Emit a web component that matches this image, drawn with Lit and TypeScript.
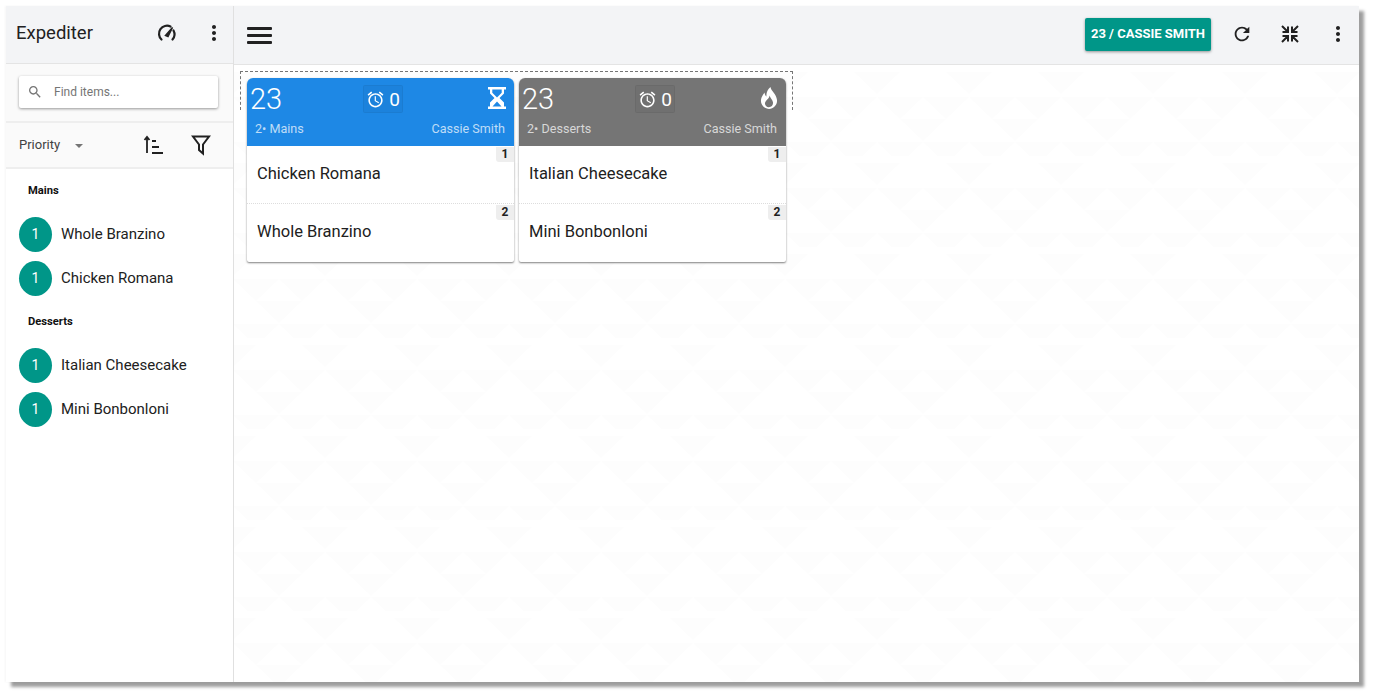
import { LitElement, html, css, svg } from "lit";
import { customElement } from "lit/decorators.js";

const P = {
  more: "M12 8c1.1 0 2-.9 2-2s-.9-2-2-2-2 .9-2 2 .9 2 2 2zm0 2c-1.1 0-2 .9-2 2s.9 2 2 2 2-.9 2-2-.9-2-2-2zm0 6c-1.1 0-2 .9-2 2s.9 2 2 2 2-.9 2-2-.9-2-2-2z",
  search: "M15.5 14h-.79l-.28-.27C15.41 12.59 16 11.11 16 9.5 16 5.91 13.09 3 9.5 3S3 5.91 3 9.5 5.91 16 9.5 16c1.61 0 3.09-.59 4.23-1.57l.27.28v.79l5 4.99L20.49 19l-4.99-5zm-6 0C7.01 14 5 11.99 5 9.5S7.01 5 9.5 5 14 7.01 14 9.5 11.99 14 9.5 14z",
  refresh: "M17.65 6.35C16.2 4.9 14.21 4 12 4c-4.42 0-7.99 3.58-7.99 8s3.57 8 7.99 8c3.73 0 6.84-2.55 7.73-6h-2.08c-.82 2.33-3.04 4-5.65 4-3.31 0-6-2.69-6-6s2.69-6 6-6c1.66 0 3.14.69 4.22 1.78L13 11h7V4l-2.35 2.35z",
  alarm: "M22 5.72l-4.6-3.86-1.29 1.53 4.6 3.86L22 5.72zM7.88 3.39L6.6 1.86 2 5.71l1.29 1.53 4.59-3.85zM12.5 8H11v6l4.75 2.85.75-1.23-4-2.37V8zM12 4c-4.97 0-9 4.03-9 9s4.02 9 9 9c4.97 0 9-4.03 9-9s-4.03-9-9-9zm0 16c-3.87 0-7-3.13-7-7s3.13-7 7-7 7 3.13 7 7-3.13 7-7 7z",
  flame: "M13.500 1C14 5 19.500 8 20 14C20.500 19 16.500 23 12 23C7.500 23 3.500 19 4 14C4.300 11 6 9 7.500 6.500C7.800 8.500 8.500 10 9.500 10.500C9 7 10.500 3.500 13.500 1zM12.500 9.500C12.500 13 7.500 14.500 8 18C8.300 20 10 21 11.500 21.200C14.500 21.400 16.300 19 16 16.500C15.800 14 13.500 12.500 12.500 9.500z",
  hourglass: "M3 1h18v2.500h-2V7.500l-4.500 4.500 4.500 4.500v4h2V23H3v-2.500h2v-4L9.500 12 5 7.500v-4H3V1zm4.300 2.500v3.200l4.700 4.700 4.700-4.700V3.500H7.300zM12 15.500l-4.500 5h9L12 15.500z",
};

const icon = (d: string, size: number, cls = "") => html`<svg class=${cls} width=${size} height=${size} viewBox="0 0 24 24" fill="currentColor"><path fill-rule="evenodd" d=${d}></path></svg>`;

const tri = (x: number, y: number) => svg`<polygon points="${x - 23},${y} ${x + 23},${y} ${x},${y + 22}"></polygon>`;

@customElement("order-card")
class OrderCard extends LitElement {
  static properties = { course: {}, color: {}, items: { type: Array }, flame: { type: Boolean } };
  course = "";
  color = "blue";
  items: string[] = [];
  flame = false;
  static styles = css`
    :host { display: block; width: 267px; font-family: Roboto, sans-serif; }
    .card { box-shadow: 0 1px 2px rgba(0,0,0,.5); border-radius: 6px 6px 2px 2px; background: #fff; }
    .head { height: 68px; border-radius: 6px 6px 0 0; color: #fff; display: grid; grid-template-rows: 34px 28px; box-sizing: border-box; padding: 6px 5px 0 3px; }
    .blue { background: #1e88e5; }
    .gray { background: #757575; }
    .top { display: grid; grid-template-columns: 113px 40px 1fr; align-items: start; }
    .num { font-size: 29px; font-weight: 300; line-height: 31px; }
    .timer { width: 40px; height: 28px; margin-top: 1px; box-sizing: border-box; background: rgba(0,0,0,.04); border: 1px solid rgba(0,0,0,.05); border-radius: 2px; display: flex; align-items: center; justify-content: center; gap: 4px; font-size: 19px; font-weight: 400; }
    .state { justify-self: end; margin-top: 2px; }
    .sub { display: flex; justify-content: space-between; margin: 0 4px 0 5px; font-size: 12.600px; line-height: 22px; color: rgba(255,255,255,.72); }
    .item { position: relative; height: 58px; box-sizing: border-box; padding: 18px 10px 0; font-size: 16.500px; line-height: 20px; color: #212121; border-bottom: 1px dotted #ddd; }
    .item:last-child { border-bottom: 0; }
    .badge { position: absolute; top: 1px; right: 0; width: 18px; height: 15px; background: #eee; border-radius: 0 0 0 3px; font-size: 12px; font-weight: 700; line-height: 15px; text-align: center; color: #212121; }
  `;
  render() {
    return html`<div class="card">
      <div class="head ${this.color}">
        <div class="top">
          <div class="num">23</div>
          <div class="timer">${icon(P.alarm, 19)}<span>0</span></div>
          ${icon(this.flame ? P.flame : P.hourglass, 24, "state")}
        </div>
        <div class="sub"><span>2• ${this.course}</span><span>Cassie Smith</span></div>
      </div>
      ${this.items.map((t, i) => html`<div class="item">${t}<span class="badge">${i + 1}</span></div>`)}
    </div>`;
  }
}

@customElement("app-root")
class AppRoot extends LitElement {
  static styles = css`
    :host { display: block; width: 1373px; height: 695px; background: #fff; box-sizing: border-box; padding: 6px 14px 13px 6px; font-family: Roboto, sans-serif; color: #212121; overflow: hidden; }
    .frame { height: 676px; display: grid; grid-template-columns: 228px 1fr; background: #fff; box-shadow: 5px 5px 3px rgba(0,0,0,.38), -1px 0 2px rgba(0,0,0,.04); }
    aside { border-right: 1px solid #e0e0e0; display: flex; flex-direction: column; min-width: 0; }
    .shead { height: 58px; box-sizing: border-box; background: #f3f4f6; border-bottom: 1px solid #e4e4e4; display: flex; align-items: center; padding: 0 7px 4px 10px; }
    .shead .title { flex: 1; font-size: 18.500px; color: #212121; }
    .shead svg + svg { margin-left: 23px; }
    .searchwrap { height: 59px; box-sizing: border-box; background: #fafafa; border-bottom: 2px solid #eee; padding: 12px 15px 0 13px; }
    .search { height: 32px; background: #fff; border-radius: 2px; box-shadow: 0 1px 3px rgba(0,0,0,.4); display: flex; align-items: center; padding-left: 8px; gap: 10px; font-size: 12px; color: #757575; }
    .sort { height: 46px; box-sizing: border-box; background: #fafafa; border-bottom: 2px solid #eee; display: flex; align-items: center; padding: 0 20px 1px 13px; font-size: 13px; color: #424242; }
    .caret { width: 0; height: 0; margin-left: 15px; margin-top: 2px; border: 4.500px solid transparent; border-top: 4.500px solid #757575; border-bottom: 0; }
    .sort .spacer { flex: 1; }
    .sort .filter { margin-left: 23px; }
    .list { padding: 15px 0 0 13px; }
    .cat { font-size: 11.200px; font-weight: 700; color: #111; line-height: 13px; padding-left: 9px; margin-bottom: 15px; }
    .row { height: 44px; display: flex; align-items: center; gap: 9px; font-size: 15px; color: #212121; }
    .row + .cat { margin-top: 15px; }
    .dot { width: 33px; height: 35px; border-radius: 50%; background: #009688; color: #fff; font-size: 14px; font-weight: 400; display: flex; align-items: center; justify-content: center; }
    main { position: relative; min-width: 0; display: flex; flex-direction: column; }
    .bg { position: absolute; left: 0; top: 59px; width: 100%; height: calc(100% - 59px); }
    .bg polygon { fill: #fdfdfd; }
    .bar { position: relative; height: 59px; box-sizing: border-box; background: #f3f4f6; border-bottom: 1px solid #e4e4e4; display: flex; align-items: center; padding: 0 9px 3px 13px; }
    .menu { display: flex; flex-direction: column; gap: 4px; width: 25px; margin-top: 4px; }
    .menu i { display: block; height: 3px; background: #212121; border-radius: 1px; }
    .bar .grow { flex: 1; }
    .cta { width: 126px; height: 33px; margin-top: 2px; padding-bottom: 2px; box-sizing: border-box; background: #009688; color: #fff; border-radius: 2px; box-shadow: 0 1px 3px rgba(0,0,0,.4); font-size: 13px; font-weight: 700; display: flex; align-items: center; justify-content: center; }
    .bar .ref { margin-left: 20px; }
    .bar .comp { margin-left: 27px; }
    .bar .dots { margin-left: 26px; }
    .stage { position: relative; padding: 13px 0 0 13px; }
    .group { position: relative; display: inline-flex; gap: 5px; }
    .group::before { content: ""; position: absolute; left: -7px; right: -7px; top: -7px; height: 38px; border: 1px dashed #757575; border-bottom: 0; }
    .group order-card { position: relative; }
  `;
  render() {
    return html`<div class="frame">
      <aside>
        <div class="shead">
          <span class="title">Expediter</span>
          <svg width="24" height="24" viewBox="0 0 24 24" fill="none" stroke="#212121" stroke-width="2.200" stroke-linecap="round"><path d="M6.500 18.500A8 8 0 0 1 15.500 5.500M18.500 9.500a8 8 0 0 1-1 9"></path><path d="M10.500 14.500 17.500 6.500 13 15.500z" fill="#212121" stroke-width="1.500"></path></svg>
          ${icon(P.more, 24)}
        </div>
        <div class="searchwrap"><div class="search">${icon(P.search, 16)}<span style="margin-left:1px">Find items...</span></div></div>
        <div class="sort">
          <span>Priority</span><span class="caret"></span><span class="spacer"></span>
          <svg width="24" height="24" viewBox="0 0 24 24" fill="none" stroke="#212121" stroke-width="1.800"><path d="M5 20V4M2.500 7 5 4l2.500 3M10 8h4M10 14h7M10 20h11"></path></svg>
          <svg class="filter" width="24" height="24" viewBox="0 0 24 24" fill="none" stroke="#212121" stroke-width="2"><path d="M4 3.500h16l-6 8v9l-4-3.500v-5.500z"></path></svg>
        </div>
        <div class="list">
          <div class="cat">Mains</div>
          <div class="row"><span class="dot">1</span>Whole Branzino</div>
          <div class="row"><span class="dot">1</span>Chicken Romana</div>
          <div class="cat">Desserts</div>
          <div class="row"><span class="dot">1</span>Italian Cheesecake</div>
          <div class="row"><span class="dot">1</span>Mini Bonbonloni</div>
        </div>
      </aside>
      <main>
        <svg class="bg"><defs><pattern id="tri" width="92" height="91" patternUnits="userSpaceOnUse">
          ${tri(-1, 7)}${tri(91, 7)}${tri(22, 32)}${tri(68, 32)}${tri(45, 54)}${tri(22, 77)}${tri(68, 77)}
        </pattern></defs><rect width="100%" height="100%" fill="url(#tri)"></rect></svg>
        <div class="bar">
          <div class="menu"><i></i><i></i><i></i></div>
          <span class="grow"></span>
          <div class="cta">23 / CASSIE SMITH</div>
          ${icon(P.refresh, 22, "ref")}
          <svg class="comp" width="20" height="20" viewBox="0 0 20 20" fill="none" stroke="#212121" stroke-width="2"><path d="M2 2l5.500 5.500M8 2.500V8H2.500M18 2l-5.500 5.500M12 2.500V8h5.500M2 18l5.500-5.500M8 17.500V12H2.500M18 18l-5.500-5.500M12 17.500V12h5.500"></path></svg>
          ${icon(P.more, 24, "dots")}
        </div>
        <div class="stage">
          <div class="group">
            <order-card course="Mains" color="blue" .items=${["Chicken Romana", "Whole Branzino"]}></order-card>
            <order-card course="Desserts" color="gray" .flame=${true} .items=${["Italian Cheesecake", "Mini Bonbonloni"]}></order-card>
          </div>
        </div>
      </main>
    </div>`;
  }
}
